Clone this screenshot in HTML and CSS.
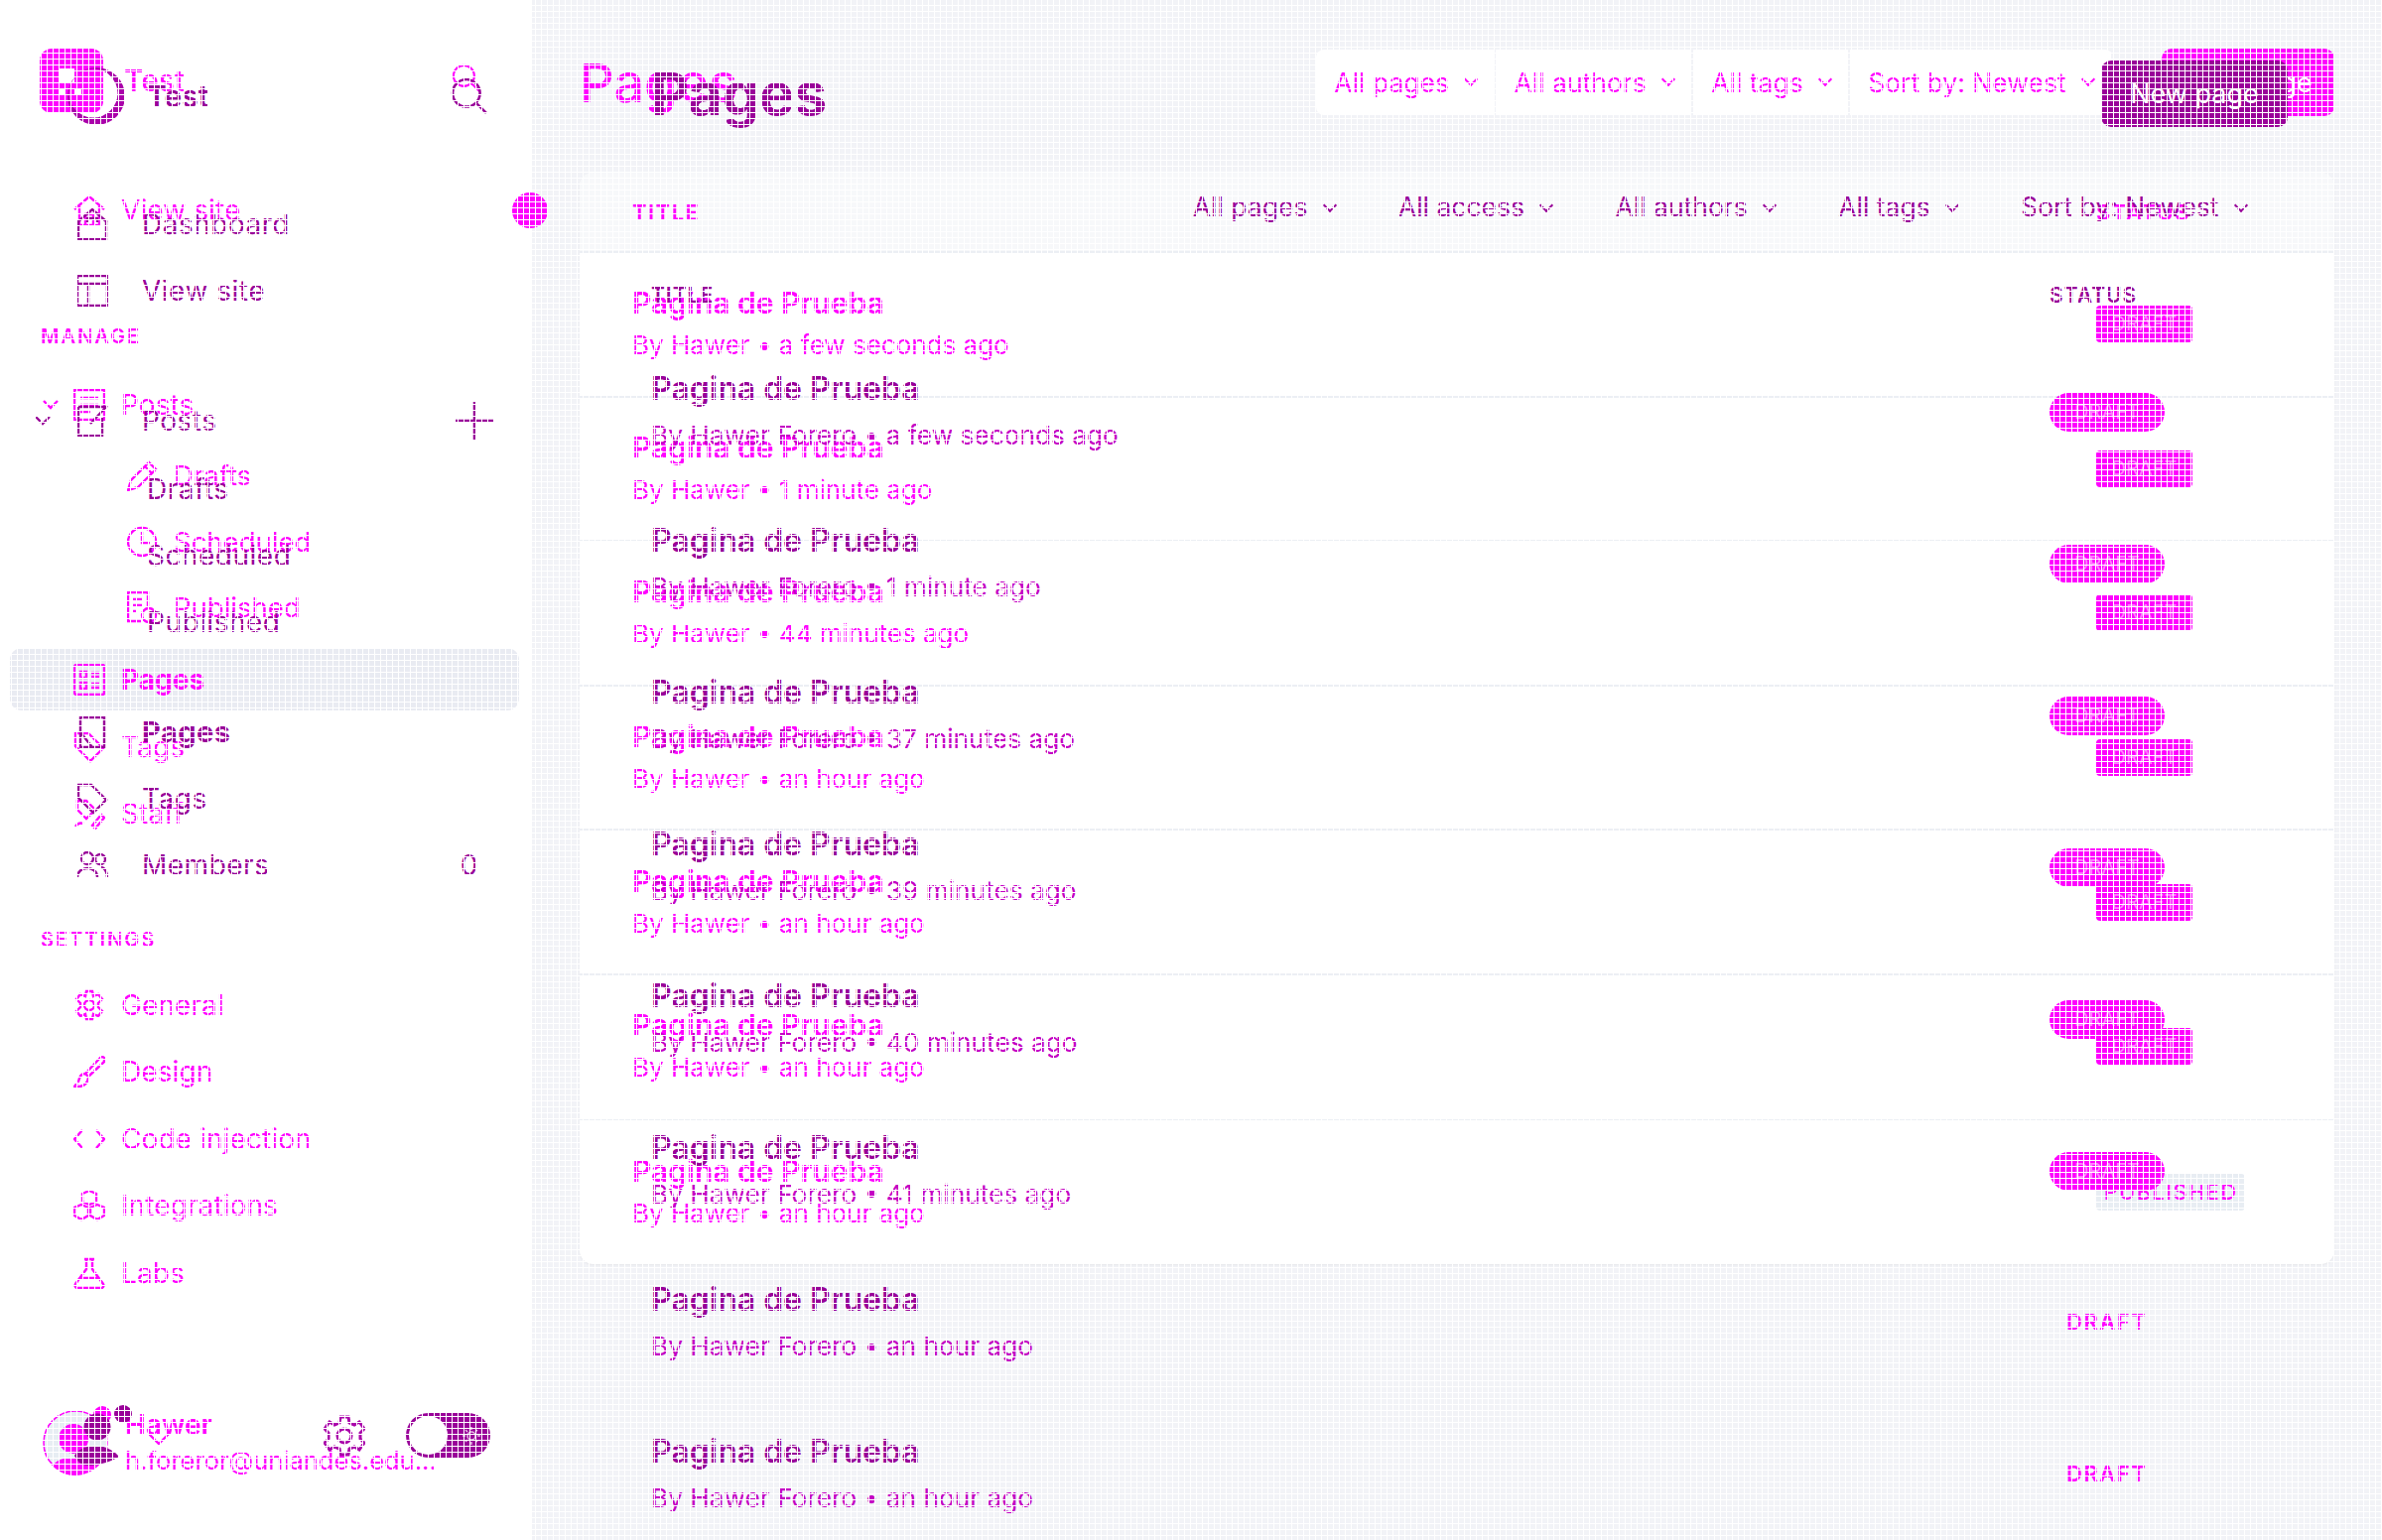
FILE: index.html
```html
<!DOCTYPE html>
<html lang="en">
<head>
    <meta charset="UTF-8">
    <title>Pages</title>
    <link rel="stylesheet" href="styles.css">
</head>
<body>
<div class="stage">

    <!-- first capture, magenta -->
    <div class="layer layer-a">
        <aside class="side">
            <div class="side-head">
                <span class="logo-square">
                    <span class="logo-bar"></span>
                    <span class="logo-dots"><i></i><i></i></span>
                </span>
                <span class="site-name">Test</span>
                <svg class="icon search" viewBox="0 0 32 32"><circle cx="13" cy="13" r="12"/><path d="M22 22l9 9"/></svg>
            </div>
            <div class="row first">
                <svg class="icon" viewBox="0 0 32 32"><path d="M1 15L16 2l15 13M6 12v19h20V12M12 31V20h8v11"/></svg>
                <span>View site</span>
                <span class="ping"></span>
            </div>
            <div class="group manage">MANAGE</div>
            <div class="row posts">
                <svg class="chev" viewBox="0 0 16 10"><path d="M1 1l7 7 7-7"/></svg>
                <svg class="icon" viewBox="0 0 32 32"><rect x="1" y="1" width="30" height="30"/><path d="M7 9h18M7 16h18M7 23h10"/></svg>
                <span>Posts</span>
            </div>
            <div class="row sub sub-first">
                <svg class="icon" viewBox="0 0 32 32"><path d="M1 31l3-10L22 3l7 7-18 18zM18 7l7 7"/></svg>
                <span>Drafts</span>
            </div>
            <div class="row sub">
                <svg class="icon" viewBox="0 0 32 32"><circle cx="15" cy="16" r="14"/><path d="M15 6v11h8"/></svg>
                <span>Scheduled</span>
            </div>
            <div class="row sub">
                <svg class="icon" viewBox="0 0 32 32"><path d="M14 30H1V1h20v14M6 8h10M6 14h10M6 20h4"/><circle cx="22" cy="24" r="7"/></svg>
                <span>Published</span>
            </div>
            <div class="row active">
                <svg class="icon" viewBox="0 0 32 32"><rect x="1" y="1" width="30" height="30" rx="2"/><path d="M7 8h6v6H7zM18 9h8M18 13h8M7 19h6v6H7zM18 20h8M18 24h8"/></svg>
                <span>Pages</span>
            </div>
            <div class="row tags">
                <svg class="icon" viewBox="0 0 32 32"><path d="M2 2h13l15 15-13 13L2 15z"/></svg>
                <span>Tags</span>
            </div>
            <div class="row">
                <svg class="icon" viewBox="0 0 32 32"><path d="M4 3h9l9 9-9 9-9-9zM2 29c2-3 5-4 8-3M22 31l9-11-3-3-9 11z"/></svg>
                <span>Staff</span>
            </div>
            <div class="group settings">SETTINGS</div>
            <div class="row">
                <svg class="icon" viewBox="0 0 32 32"><circle cx="16" cy="16" r="5"/><path d="M13 2h6l1 5 5-2 4 5-4 4 0 4 4 4-4 5-5-2-1 5h-6l-1-5-5 2-4-5 4-4v-4L3 10l4-5 5 2z"/></svg>
                <span>General</span>
            </div>
            <div class="row">
                <svg class="icon" viewBox="0 0 32 32"><path d="M31 2c-1-1-3-1-4 0L12 18l3 3L31 6zM12 18c-5 0-6 4-7 8l-4 5c7 1 14-2 14-10z"/></svg>
                <span>Design</span>
            </div>
            <div class="row">
                <svg class="icon" viewBox="0 0 32 32"><path d="M9 7L1 16l8 9M23 7l8 9-8 9"/></svg>
                <span>Code injection</span>
            </div>
            <div class="row">
                <svg class="icon" viewBox="0 0 32 32"><path d="M16 1l7 3v8l-7 3-7-3V4zM8 15l7 3v8l-7 4-7-4v-8zM24 15l7 3v8l-7 4-7-4v-8z"/></svg>
                <span>Integrations</span>
            </div>
            <div class="row">
                <svg class="icon" viewBox="0 0 32 32"><path d="M11 2h10M13 2v10L2 27c-1 2 0 4 2 4h24c2 0 3-2 2-4L19 12V2M7 21h18"/></svg>
                <span>Labs</span>
            </div>
            <div class="user">
                <svg class="avatar" viewBox="0 0 66 66">
                    <circle class="avatar-bg" cx="33" cy="33" r="32"/>
                    <circle class="avatar-fill" cx="31" cy="29" r="15"/>
                    <path class="avatar-fill" d="M10 56c5-6 10-8 22-8s19 2 22 8c-12 13-32 13-44 0z"/>
                </svg>
                <div class="user-text">
                    <div class="user-name">Hawer</div>
                    <div class="user-mail">h.foreror@uniandes.edu...</div>
                </div>
            </div>
        </aside>

        <main class="content">
            <div class="top">
                <h1>Pages</h1>
                <div class="filters">
                    <span class="filter">All pages <i class="caret"></i></span>
                    <span class="filter">All authors <i class="caret"></i></span>
                    <span class="filter">All tags <i class="caret"></i></span>
                    <span class="filter">Sort by: Newest <i class="caret"></i></span>
                </div>
                <span class="new-btn">New page</span>
            </div>
            <div class="card">
                <div class="card-head"><span>TITLE</span><span>STATUS</span></div>
                <div class="page-row">
                    <div><div class="page-title">Pagina de Prueba</div><div class="page-sub">By Hawer • a few seconds ago</div></div>
                    <div><span class="badge">DRAFT</span></div>
                </div>
                <div class="page-row">
                    <div><div class="page-title">Pagina de Prueba</div><div class="page-sub">By Hawer • 1 minute ago</div></div>
                    <div><span class="badge">DRAFT</span></div>
                </div>
                <div class="page-row">
                    <div><div class="page-title">Pagina de Prueba</div><div class="page-sub">By Hawer • 44 minutes ago</div></div>
                    <div><span class="badge">DRAFT</span></div>
                </div>
                <div class="page-row">
                    <div><div class="page-title">Pagina de Prueba</div><div class="page-sub">By Hawer • an hour ago</div></div>
                    <div><span class="badge">DRAFT</span></div>
                </div>
                <div class="page-row">
                    <div><div class="page-title">Pagina de Prueba</div><div class="page-sub">By Hawer • an hour ago</div></div>
                    <div><span class="badge">DRAFT</span></div>
                </div>
                <div class="page-row">
                    <div><div class="page-title">Pagina de Prueba</div><div class="page-sub">By Hawer • an hour ago</div></div>
                    <div><span class="badge">DRAFT</span></div>
                </div>
                <div class="page-row">
                    <div><div class="page-title">Pagina de Prueba</div><div class="page-sub">By Hawer • an hour ago</div></div>
                    <div><span class="badge badge-pub">PUBLISHED</span></div>
                </div>
            </div>
        </main>
    </div>

    <!-- second capture, purple -->
    <div class="layer layer-b">
        <aside class="side">
            <div class="side-head">
                <svg class="logo-ring" viewBox="0 0 58 58"><path fill-rule="evenodd" d="M29 0a29 29 0 1 1 0 58a29 29 0 0 1 0-58zM26 1.5a24.5 24.5 0 1 0 0 49a24.5 24.5 0 0 0 0-49z"/></svg>
                <span class="site-name">Test</span>
                <svg class="icon search" viewBox="0 0 34 34"><circle cx="14" cy="14" r="13"/><path d="M24 24l9 9"/></svg>
            </div>
            <div class="row first">
                <svg class="icon" viewBox="0 0 32 32"><path d="M1 14L16 1l15 13M2 14v17h28V14M11 14v-4h10v4"/></svg>
                <span>Dashboard</span>
            </div>
            <div class="row">
                <svg class="icon" viewBox="0 0 32 32"><rect x="1" y="1" width="30" height="30"/><path d="M1 9h30M12 9v22"/></svg>
                <span>View site</span>
            </div>
            <div class="row posts">
                <svg class="chev" viewBox="0 0 16 10"><path d="M1 1l7 7 7-7"/></svg>
                <svg class="icon" viewBox="0 0 32 32"><path d="M2 2h28M2 2v29h24V13M14 19L31 1"/></svg>
                <span>Posts</span>
                <svg class="plus" viewBox="0 0 36 36"><path d="M18 0v36M0 18h36"/></svg>
            </div>
            <div class="row sub sub-first"><span>Drafts</span></div>
            <div class="row sub"><span>Scheduled</span></div>
            <div class="row sub"><span>Published</span></div>
            <div class="row pages">
                <svg class="icon" viewBox="0 0 32 32"><path d="M4 1h24v30H4zM4 1v15l12 15"/></svg>
                <span class="heavy">Pages</span>
            </div>
            <div class="row">
                <svg class="icon" viewBox="0 0 32 32"><path d="M2 2h13l15 15-13 13L2 15z"/></svg>
                <span>Tags</span>
            </div>
            <div class="row">
                <svg class="icon" viewBox="0 0 32 32"><circle cx="11" cy="9" r="6"/><circle cx="24" cy="10" r="5"/><path d="M1 28c0-12 20-12 20 0M24 18c4 0 7 4 7 10"/></svg>
                <span>Members</span>
                <span class="count">0</span>
            </div>
            <div class="user">
                <svg class="blobs" viewBox="0 0 58 61">
                    <circle class="blob-pink" cx="28" cy="10" r="9"/>
                    <circle cx="49" cy="9" r="9"/>
                    <circle cx="23" cy="22" r="13.5"/>
                    <path d="M0 51c5-9 15-10 23-10 9 0 19 7 22 11-10 6-27 11-37 8-4-2-6-5-8-9z"/>
                </svg>
                <svg class="user-chev" viewBox="0 0 22 12"><path d="M1 1l10 10L21 1"/></svg>
                <svg class="gear" viewBox="0 0 42 42"><circle cx="21" cy="21" r="7"/><path d="M17 2h8l1 6 5 2 5-3 5 7-4 4v6l4 4-5 7-5-3-5 2-1 6h-8l-1-6-5-2-5 3-5-7 4-4v-6l-4-4 5-7 5 3 5-2z"/></svg>
                <span class="toggle">
                    <span class="knob"></span>
                    <svg class="sun" viewBox="0 0 20 20"><circle cx="10" cy="10" r="4"/><path d="M10 1v3M10 16v3M1 10h3M16 10h3M4 4l2 2M14 14l2 2M4 16l2-2M14 6l2-2"/></svg>
                </span>
            </div>
        </aside>

        <main class="content">
            <div class="top">
                <h1>Pages</h1>
                <span class="new-btn">New page</span>
            </div>
            <div class="filter-row">
                <span class="filter">All pages <i class="caret"></i></span>
                <span class="filter">All access <i class="caret"></i></span>
                <span class="filter">All authors <i class="caret"></i></span>
                <span class="filter">All tags <i class="caret"></i></span>
                <span class="filter">Sort by: Newest <i class="caret"></i></span>
            </div>
            <div class="list-head"><span>TITLE</span><span>STATUS</span></div>
            <div class="page-row">
                <div><div class="page-title">Pagina de Prueba</div><div class="page-sub">By Hawer Forero • a few seconds ago</div></div>
                <div><span class="pill">DRAFT</span></div>
            </div>
            <div class="page-row">
                <div><div class="page-title">Pagina de Prueba</div><div class="page-sub">By Hawer Forero • 1 minute ago</div></div>
                <div><span class="pill">DRAFT</span></div>
            </div>
            <div class="page-row">
                <div><div class="page-title">Pagina de Prueba</div><div class="page-sub">By Hawer Forero • 37 minutes ago</div></div>
                <div><span class="pill">DRAFT</span></div>
            </div>
            <div class="page-row">
                <div><div class="page-title">Pagina de Prueba</div><div class="page-sub">By Hawer Forero • 39 minutes ago</div></div>
                <div><span class="pill">DRAFT</span></div>
            </div>
            <div class="page-row">
                <div><div class="page-title">Pagina de Prueba</div><div class="page-sub">By Hawer Forero • 40 minutes ago</div></div>
                <div><span class="pill">DRAFT</span></div>
            </div>
            <div class="page-row">
                <div><div class="page-title">Pagina de Prueba</div><div class="page-sub">By Hawer Forero • 41 minutes ago</div></div>
                <div><span class="pill">DRAFT</span></div>
            </div>
            <div class="page-row">
                <div><div class="page-title">Pagina de Prueba</div><div class="page-sub">By Hawer Forero • an hour ago</div></div>
                <div><span class="draft">DRAFT</span></div>
            </div>
            <div class="page-row">
                <div><div class="page-title">Pagina de Prueba</div><div class="page-sub">By Hawer Forero • an hour ago</div></div>
                <div><span class="draft">DRAFT</span></div>
            </div>
        </main>
    </div>

    <!-- white 6px lattice over everything -->
    <div class="lattice"></div>
</div>
</body>
</html>
```

FILE: styles.css
```css
html, body {
    margin: 0;
    padding: 0;
    background: #ffffff;
}

.stage {
    position: relative;
    display: grid;
    width: 2400px;
    height: 1552px;
    overflow: hidden;
    font-family: "Inter", "Liberation Sans", sans-serif;
}

.layer {
    grid-area: 1 / 1;
    display: flex;
    min-width: 0;
}

.lattice {
    position: absolute;
    inset: 0;
    z-index: 3;
    background-image:
        linear-gradient(to right, transparent 5px, #ffffff 5px),
        linear-gradient(to bottom, transparent 5px, #ffffff 5px);
    background-size: 6px 6px;
    pointer-events: none;
}

.side {
    width: 536px;
    height: 1552px;
    flex: none;
    display: flex;
    flex-direction: column;
    box-sizing: border-box;
}

.content {
    flex: 1;
    min-width: 0;
    box-sizing: border-box;
}

h1 {
    margin: 0;
    font-weight: 700;
}

.side-head {
    display: flex;
    align-items: center;
}

.site-name {
    font-weight: 600;
}

.row {
    display: flex;
    align-items: center;
    height: 67px;
    flex: none;
    font-size: 28px;
    letter-spacing: 0.1px;
    white-space: nowrap;
}

.icon {
    flex: none;
    width: 32px;
    height: 32px;
    fill: none;
    stroke: currentColor;
    stroke-width: 2.4;
}

.chev, .plus, .user-chev, .sun {
    flex: none;
    fill: none;
    stroke: currentColor;
    stroke-width: 2.4;
}

.caret {
    display: inline-block;
    width: 8px;
    height: 8px;
    margin: 0 0 6px 10px;
    border-right: 2px solid currentColor;
    border-bottom: 2px solid currentColor;
    transform: rotate(45deg);
}

.page-row {
    display: grid;
    grid-template-columns: 1fr 240px;
    align-items: center;
    box-sizing: border-box;
}

/* ---- magenta capture ---- */

.layer-a {
    color: #ff00ff;
}

.layer-a .side {
    position: relative;
    z-index: 1;
    background: #ffffff;
    padding-top: 48px;
}

.layer-a .content {
    background: #f2f3f7;
    padding: 50px 48px 0 48px;
}

.layer-a .side-head {
    height: 66px;
    padding-left: 40px;
    margin-bottom: 64px;
}

.logo-square {
    display: flex;
    flex-direction: column;
    gap: 7px;
    box-sizing: border-box;
    width: 64px;
    height: 65px;
    padding: 20px 0 0 19px;
    border-radius: 12px;
    background: #ff00ff;
}

.logo-bar {
    width: 16px;
    height: 14px;
    background: #ffffff;
}

.logo-dots {
    display: flex;
    gap: 9px;
}

.logo-dots i {
    width: 7px;
    height: 5px;
    background: #ffffff;
}

.layer-a .site-name {
    margin-left: 21px;
    font-size: 30px;
    font-weight: 500;
}

.layer-a .search {
    width: 28px;
    height: 32px;
    margin-left: 270px;
    margin-top: -4px;
}

.layer-a .row {
    padding-left: 74px;
    gap: 16px;
}

.ping {
    width: 36px;
    height: 36px;
    border-radius: 50%;
    background: #ff00ff;
    margin-left: auto;
    margin-right: -16px;
}

.group {
    height: 24px;
    line-height: 24px;
    padding-left: 41px;
    font-size: 20px;
    font-weight: 600;
    letter-spacing: 2px;
}

.manage {
    margin-top: 82px;
}

.layer-a .posts {
    margin-top: 23px;
    padding-left: 43px;
}

.chev {
    width: 16px;
    height: 10px;
    margin-right: -1px;
}

.layer-a .sub {
    height: 66.5px;
    padding-left: 128px;
    gap: 15px;
    font-size: 27.5px;
    letter-spacing: 0;
}

.sub-first {
    margin-top: 5px;
}

.layer-a .active {
    height: 63px;
    margin: 7.5px 13px 0 10px;
    padding-left: 64px;
    border-radius: 12px;
    background: #e9ebf2;
    font-weight: 700;
    letter-spacing: 0;
}

.layer-a .tags {
    margin-top: 3px;
}

.settings {
    margin-top: 82px;
    margin-bottom: 20px;
}

.layer-a .settings ~ .row {
    height: 67.5px;
}

.user {
    display: flex;
    align-items: center;
    margin-top: auto;
}

.layer-a .user {
    padding: 0 0 62px 43px;
}

.avatar {
    width: 66px;
    height: 66px;
    flex: none;
}

.avatar-bg {
    fill: #e7edf3;
    stroke: #ff00ff;
    stroke-width: 1.5;
}

.avatar-fill {
    fill: #ff00ff;
}

.user-text {
    margin-left: 17px;
}

.user-name {
    font-size: 28px;
    font-weight: 600;
    line-height: 36px;
}

.user-mail {
    font-size: 25.5px;
    line-height: 36px;
    white-space: nowrap;
}

.layer-a .top {
    display: flex;
    align-items: center;
    height: 66px;
    margin-bottom: 58px;
}

.layer-a h1 {
    font-size: 54px;
    font-weight: 500;
    margin-right: auto;
}

.filters {
    display: flex;
    height: 66px;
    background: #ffffff;
    border-radius: 8px;
    margin-right: 49px;
}

.filters .filter {
    display: flex;
    align-items: center;
    padding: 0 18px;
    font-size: 26.5px;
    white-space: pre;
    border-right: 2px solid #f2f3f7;
}

.new-btn {
    display: flex;
    align-items: center;
    justify-content: center;
    border-radius: 10px;
    color: #ffffff;
    font-size: 27px;
}

.layer-a .new-btn {
    width: 174px;
    height: 68px;
    background: #ff00ff;
}

.card {
    background: #ffffff;
    border-radius: 14px;
    overflow: hidden;
    box-shadow: 0 1px 2px #e6e7ea;
}

.card-head {
    display: grid;
    grid-template-columns: 1fr 240px;
    align-items: center;
    height: 81px;
    box-sizing: border-box;
    padding-left: 53px;
    background: #f7f8fa;
    border-bottom: 2px solid #eceff4;
    font-size: 22px;
    font-weight: 600;
    letter-spacing: 1.5px;
}

.layer-a .page-row {
    height: 145.6px;
    padding-left: 53px;
    border-bottom: 2px solid #eceff4;
}

.layer-a .page-row:last-child {
    border-bottom: 0;
}

.layer-a .page-title {
    font-size: 30px;
    font-weight: 600;
    line-height: 36px;
}

.layer-a .page-sub {
    margin-top: 7px;
    font-size: 26px;
    line-height: 36px;
}

.badge {
    display: inline-block;
    width: 97px;
    height: 37px;
    line-height: 37px;
    border-radius: 4px;
    background: #ff00ff;
    color: #ff80ff;
    font-size: 20px;
    text-align: center;
}

.badge-pub {
    width: 150px;
    background: #e8edf3;
    color: #ff00ff;
    font-size: 22px;
    font-weight: 500;
    letter-spacing: 1.3px;
}

/* ---- purple capture ---- */

.layer-b {
    position: relative;
    z-index: 2;
    color: #990099;
}

.layer-b .side {
    padding-top: 68px;
}

.layer-b .content {
    padding: 61px 95px 0 120px;
}

.layer-b .side-head {
    height: 58px;
    padding-left: 68px;
    margin-bottom: 66px;
}

.logo-ring {
    width: 58px;
    height: 58px;
    fill: #aa00aa;
}

.layer-b .site-name {
    margin-left: 22px;
    font-size: 30px;
}

.layer-b .search {
    width: 38px;
    height: 36px;
    margin-left: 244px;
}

.layer-b .row {
    padding-left: 77px;
    gap: 34px;
    letter-spacing: 0.5px;
}

.layer-b .posts {
    margin-top: 64px;
    padding-left: 35px;
}

.layer-b .chev {
    margin-right: -8px;
}

.plus {
    width: 38px;
    height: 38px;
    margin-left: auto;
    margin-right: 39px;
}

.layer-b .sub {
    padding-left: 148px;
}

.layer-b .sub-first {
    margin-top: 2px;
}

.layer-b .pages {
    margin-top: 44px;
}

.heavy {
    font-size: 29px;
    font-weight: 700;
}

.count {
    margin-left: auto;
    margin-right: 54px;
}

.layer-b .user {
    padding: 0 0 75px 75px;
}

.blobs {
    width: 58px;
    height: 61px;
    flex: none;
    fill: #990099;
}

.blob-pink {
    fill: #ff00ff;
}

.user-chev {
    width: 22px;
    height: 12px;
    margin: 6px 0 0 16px;
    color: #ff00ff;
}

.gear {
    width: 42px;
    height: 42px;
    flex: none;
    margin-left: 155px;
    fill: none;
    stroke: #aa00aa;
    stroke-width: 3;
}

.toggle {
    display: flex;
    align-items: center;
    width: 85px;
    height: 45px;
    margin-left: 41px;
    border-radius: 23px;
    background: #990099;
}

.knob {
    display: block;
    width: 39px;
    height: 39px;
    margin: 3px;
    border-radius: 50%;
    background: #ffffff;
}

.sun {
    width: 20px;
    height: 20px;
    margin-left: 11px;
    color: #e6bfe6;
    stroke-width: 1.5;
}

.layer-b .top {
    display: flex;
    align-items: center;
    justify-content: space-between;
    height: 67px;
}

.layer-b h1 {
    font-size: 59px;
}

.layer-b .new-btn {
    width: 188px;
    height: 67px;
    background: #990099;
}

.filter-row {
    display: flex;
    justify-content: flex-end;
    align-items: center;
    gap: 64px;
    height: 60px;
    margin-top: 50px;
    padding-right: 42px;
    font-size: 26.5px;
    white-space: pre;
}

.list-head {
    display: grid;
    grid-template-columns: 1fr 240px;
    align-items: center;
    height: 40px;
    margin-top: 39px;
    margin-bottom: 22px;
    font-size: 21px;
    font-weight: 600;
    letter-spacing: 1px;
}

.layer-b .page-row {
    height: 153px;
}

.layer-b .page-title {
    font-size: 32px;
    font-weight: 600;
    line-height: 40px;
}

.layer-b .page-sub {
    margin-top: 7px;
    font-size: 26.25px;
    line-height: 40px;
    color: #c400c4;
}

.pill {
    display: inline-block;
    width: 116px;
    height: 39px;
    line-height: 39px;
    border-radius: 20px;
    background: #ff00ff;
    color: #ff80ff;
    font-size: 20px;
    text-align: center;
}

.draft {
    margin: -3px 0 0 17px;
    display: inline-block;
    font-size: 22px;
    font-weight: 600;
    letter-spacing: 1.5px;
    color: #ff00ff;
}
```
